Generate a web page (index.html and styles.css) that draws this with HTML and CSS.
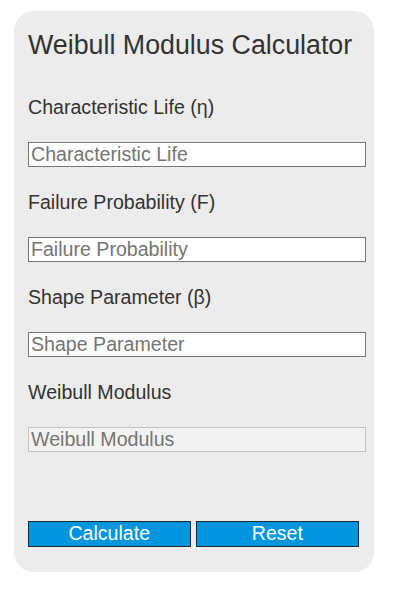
FILE: index.html
```html
<!DOCTYPE html>
<html lang="en">
<head>
<meta charset="utf-8">
<title>Weibull Modulus Calculator</title>
<link rel="stylesheet" href="styles.css">
</head>
<body>
<div class="card">
  <h2 class="title">Weibull Modulus Calculator</h2>
  <label class="label" for="life">Characteristic Life (η)</label>
  <input class="field" id="life" type="text" placeholder="Characteristic Life">
  <label class="label" for="prob">Failure Probability (F)</label>
  <input class="field" id="prob" type="text" placeholder="Failure Probability">
  <label class="label" for="shape">Shape Parameter (β)</label>
  <input class="field" id="shape" type="text" placeholder="Shape Parameter">
  <label class="label" for="mod">Weibull Modulus</label>
  <input class="field result" id="mod" type="text" placeholder="Weibull Modulus" readonly>
  <div class="actions">
    <button class="btn" type="button">Calculate</button>
    <button class="btn" type="button">Reset</button>
  </div>
</div>
</body>
</html>
```

FILE: styles.css
```css
html, body {
  margin: 0;
  padding: 0;
  background: #ffffff;
}
body {
  font-family: "Liberation Sans", Arial, sans-serif;
  color: #333333;
}
.card {
  box-sizing: border-box;
  width: 360px;
  margin: 11px 0 0 14px;
  padding: 19px 8px 25px 14px;
  background: #ececec;
  border-radius: 20px;
  display: flex;
  flex-direction: column;
}
.title {
  margin: 0 0 34.6px 0;
  font-size: 26.8px;
  line-height: 31px;
  font-weight: normal;
  color: #333333;
}
.label {
  display: block;
  font-size: 19.6px;
  line-height: 22.5px;
  margin: 0 0 23.6px 0;
  color: #333333;
}
.field {
  box-sizing: border-box;
  width: 338px;
  height: 25px;
  margin: 0 0 23.9px 0;
  padding: 0 2px;
  border: 1px solid #767676;
  border-radius: 0;
  background: #ffffff;
  font-family: "Liberation Sans", Arial, sans-serif;
  font-size: 19.6px;
  color: #333333;
  outline: none;
}
.field::placeholder {
  color: #757575;
  opacity: 1;
}
.result {
  background: #f3f3f3;
  border-color: #c2c2c2;
  margin-bottom: 69.3px;
}
.actions {
  display: flex;
  gap: 5.6px;
}
.btn {
  box-sizing: border-box;
  width: 162.5px;
  height: 25.7px;
  margin: 0;
  padding: 0;
  border: 1px solid #1f2a30;
  border-radius: 0;
  background: #0095dc;
  color: #ffffff;
  font-family: "Liberation Sans", Arial, sans-serif;
  font-size: 19.6px;
  line-height: 23px;
  cursor: pointer;
}
```
